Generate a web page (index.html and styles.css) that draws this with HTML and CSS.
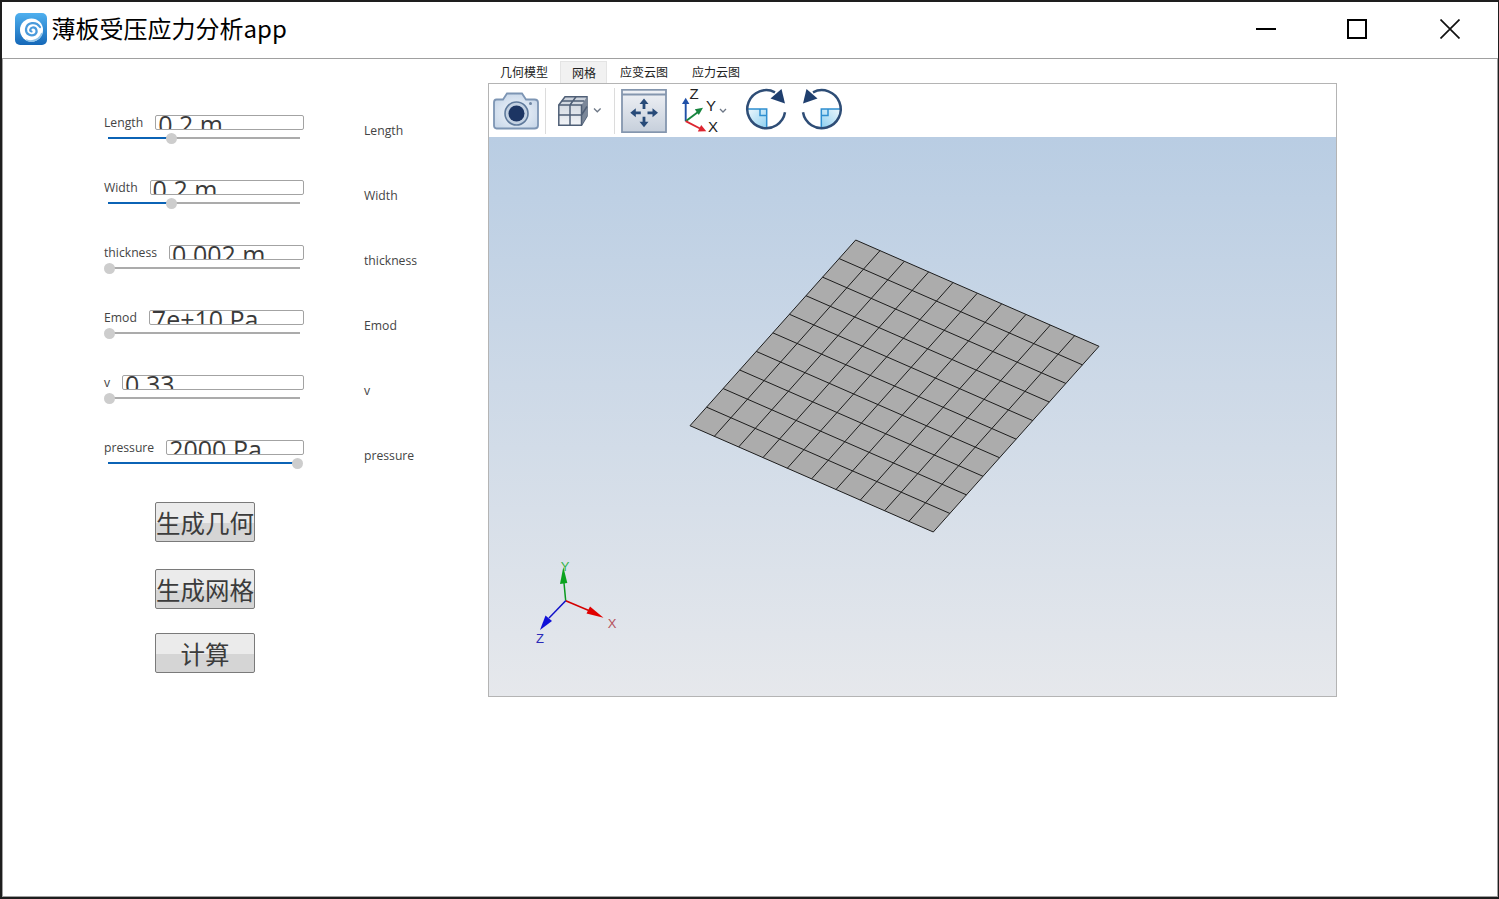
FILE: index.html
```html
<!DOCTYPE html>
<html lang="zh">
<head>
<meta charset="utf-8">
<title>薄板受压应力分析app</title>
<link rel="stylesheet" href="styles.css">
</head>
<body>
<div class="window">
  <header class="titlebar">
    <svg class="logo" viewBox="0 0 32 32">
      <defs><linearGradient id="lg" x1="0" y1="0" x2="0" y2="1"><stop offset="0" stop-color="#4fb0ef"/><stop offset="1" stop-color="#1568b8"/></linearGradient></defs>
      <rect width="32" height="32" rx="5" fill="url(#lg)"/>
      <circle cx="16.500" cy="17" r="11.500" fill="#fff"/>
      <path d="M27 20C25 26 18 30 11 27" fill="none" stroke="#8fc4ea" stroke-width="1.800"/>
      <path d="M25 14C21 8 12 9 11 16C10.500 21 16 24 20 21.500C23 19 21.500 14 17.500 14.500C15 15 14.500 18 16.500 18.500" fill="none" stroke="#4a9bdc" stroke-width="2.200" stroke-linecap="round"/>
    </svg>
    <h1 class="title">薄板受压应力分析app</h1>
    <div class="controls">
      <svg class="ctl ctl-min" viewBox="0 0 20 20"><path d="M0 10H20" stroke="#000" stroke-width="2"/></svg>
      <svg class="ctl ctl-max" viewBox="0 0 20 20"><rect x="1" y="1" width="18" height="18" fill="none" stroke="#000" stroke-width="2"/></svg>
      <svg class="ctl ctl-close" viewBox="0 0 20 20"><path d="M0.500 0.500L19.500 19.500M19.500 0.500L0.500 19.500" stroke="#111" stroke-width="1.700"/></svg>
    </div>
  </header>
  <main class="content">
    <section class="form">
      <div class="row">
        <div class="group">
          <div class="field"><span class="lbl">Length</span><div class="input"><span>0.2 m</span></div></div>
          <div class="track"><div class="fill on" style="width:63px"></div></div>
        </div>
        <span class="side">Length</span>
      </div>
      <div class="row">
        <div class="group">
          <div class="field"><span class="lbl">Width</span><div class="input"><span>0.2 m</span></div></div>
          <div class="track"><div class="fill on" style="width:63px"></div></div>
        </div>
        <span class="side">Width</span>
      </div>
      <div class="row">
        <div class="group">
          <div class="field"><span class="lbl">thickness</span><div class="input"><span>0.002 m</span></div></div>
          <div class="track"><div class="fill" style="width:1px"></div></div>
        </div>
        <span class="side">thickness</span>
      </div>
      <div class="row">
        <div class="group">
          <div class="field"><span class="lbl">Emod</span><div class="input"><span>7e+10 Pa</span></div></div>
          <div class="track"><div class="fill" style="width:1px"></div></div>
        </div>
        <span class="side">Emod</span>
      </div>
      <div class="row">
        <div class="group">
          <div class="field"><span class="lbl">v</span><div class="input"><span>0.33</span></div></div>
          <div class="track"><div class="fill" style="width:1px"></div></div>
        </div>
        <span class="side">v</span>
      </div>
      <div class="row">
        <div class="group">
          <div class="field"><span class="lbl">pressure</span><div class="input"><span>2000 Pa</span></div></div>
          <div class="track"><div class="fill on" style="width:189px"></div></div>
        </div>
        <span class="side">pressure</span>
      </div>
      <div class="buttons">
        <button class="btn" type="button">生成几何</button>
        <button class="btn" type="button">生成网格</button>
        <button class="btn btn-last" type="button">计算</button>
      </div>
    </section>
    <section class="viewer">
      <nav class="tabs">
        <span class="tab">几何模型</span>
        <span class="tab active">网格</span>
        <span class="tab">应变云图</span>
        <span class="tab">应力云图</span>
      </nav>
      <div class="panel">
        <div class="toolbar">
          <svg class="ic ic-cam" viewBox="0 0 46 38">
            <defs><radialGradient id="cam" cx="0.5" cy="0.55" r="0.6"><stop offset="0" stop-color="#f4f8fd"/><stop offset="1" stop-color="#c8d7e9"/></radialGradient></defs>
            <path d="M3.500 7.500H10L14 1.500H29L33 7.500H41.500Q45 7.500 45 10.500V33.500Q45 36.500 41.500 36.500H3.500Q1 36.500 1 33.500V10.500Q1 7.500 3.500 7.500Z" fill="url(#cam)" stroke="#7d95b4" stroke-width="1.800"/>
            <circle cx="23.500" cy="21.500" r="11.500" fill="#c3d1e2" stroke="#5f7a9c" stroke-width="1.600"/>
            <circle cx="23.500" cy="21.500" r="8" fill="#1c3563"/>
            <circle cx="37.500" cy="11.500" r="1.500" fill="#6f86a3"/>
          </svg>
          <span class="sep sep-a"></span>
          <svg class="ic ic-cube" viewBox="0 0 46 30">
            <defs><linearGradient id="cube" x1="0" y1="0" x2="0" y2="1"><stop offset="0" stop-color="#c9d0da"/><stop offset="1" stop-color="#f2f4f7"/></linearGradient></defs>
            <path d="M0.800 9L7 0.800H29V20L23.500 29.200H0.800Z" fill="url(#cube)" stroke="#4f5f76" stroke-width="1.500"/>
            <path d="M23.500 9L29 0.800V20L23.500 29.200Z" fill="#7b8799"/>
            <path d="M0.800 9H23.500V29.200M12 9V29.200M0.800 19H23.500M12 9L18 0.800M3.800 5H26.200M23.500 19L29 10.500" fill="none" stroke="#4f5f76" stroke-width="1.500"/>
            <path d="M36 12.500L39.300 15.800L42.600 12.500" fill="none" stroke="#6d7786" stroke-width="1.300"/>
          </svg>
          <span class="sep sep-b"></span>
          <svg class="ic ic-pan" viewBox="0 0 46 44">
            <defs><linearGradient id="pan" x1="0" y1="0" x2="0" y2="1"><stop offset="0" stop-color="#f0f2f6"/><stop offset="1" stop-color="#c6cfdb"/></linearGradient></defs>
            <rect x="1" y="0.800" width="44" height="42.400" fill="url(#pan)" stroke="#8496ae" stroke-width="1.800"/>
            <path d="M1 5.500H45" stroke="#8496ae" stroke-width="1.800"/>
            <g fill="#274a78" stroke="none">
              <path d="M23 9.500L27.500 15H24.400V20H21.600V15H18.500Z"/>
              <path d="M23 38.200L27.500 32.700H24.400V27.700H21.600V32.700H18.500Z"/>
              <path d="M9.300 23.800L14.800 19.300V22.400H19.800V25.200H14.800V28.300Z"/>
              <path d="M37 23.800L31.500 19.300V22.400H26.500V25.200H31.500V28.300Z"/>
            </g>
          </svg>
          <svg class="ic ic-axes" viewBox="0 0 46 44">
            <path d="M3.700 32.200V12" stroke="#1f50a8" stroke-width="1.900"/>
            <path d="M3.700 8.800L0 15H7.400Z" fill="#1f50a8"/>
            <path d="M3.700 32.200L16 23" stroke="#17853f" stroke-width="1.900"/>
            <path d="M21 18.800L12.800 20.200L16.800 26Z" fill="#17853f"/>
            <path d="M3.700 32.200L18 39.500" stroke="#dd2530" stroke-width="1.900"/>
            <path d="M24.300 42.200L15.800 42.500L19.200 36Z" fill="#dd2530"/>
            <text class="axl" x="7.500" y="9.500">Z</text>
            <text class="axl" x="24" y="22">Y</text>
            <text class="axl" x="26" y="42.500">X</text>
            <path d="M38 20L41 23L44 20" fill="none" stroke="#6d7786" stroke-width="1.300"/>
          </svg>
          <svg class="ic ic-rot" viewBox="0 0 42 43">
            <defs><linearGradient id="rq" x1="0" y1="0" x2="1" y2="1"><stop offset="0" stop-color="#eef8fd"/><stop offset="1" stop-color="#8fd0f0"/></linearGradient></defs>
            <path d="M2 20H21.700V39C11 39 2.500 31 2 20Z" fill="url(#rq)"/>
            <path d="M2 20H21.700V39M15 20V26.500H21.700" fill="none" stroke="#2f8fd0" stroke-width="1.500"/>
            <path d="M40 23.300A19 19 0 1 1 30 3.300" fill="none" stroke="#2e4d76" stroke-width="2.500"/>
            <path d="M40 14.500L25.500 9.500L36.500 0Z" fill="#1f3f6e"/>
          </svg>
          <svg class="ic ic-rot ic-rot-b" viewBox="0 0 42 43">
            <defs><linearGradient id="rq2" x1="1" y1="0" x2="0" y2="1"><stop offset="0" stop-color="#eef8fd"/><stop offset="1" stop-color="#8fd0f0"/></linearGradient></defs>
            <path d="M40 20H20.300V39C31 39 39.500 31 40 20Z" fill="url(#rq2)"/>
            <path d="M40 20H20.300V39M27 20V26.500H20.300" fill="none" stroke="#2f8fd0" stroke-width="1.500"/>
            <path d="M2 23.300A19 19 0 1 0 12 3.300" fill="none" stroke="#2e4d76" stroke-width="2.500"/>
            <path d="M2 14.500L16.500 9.500L5.500 0Z" fill="#1f3f6e"/>
          </svg>
        </div>
        <div class="scene">
          <svg class="scene-svg" viewBox="489 137 847 559">
            <path d="M855.700 240L1099 346.300L933.300 532L690 425.700Z" fill="#acacac"/>
            <path fill="none" stroke="#1c1c1c" stroke-width="1" d="M855.700 240L1099 346.300M839.130 258.570L1082.430 364.870M822.560 277.140L1065.860 383.440M805.990 295.710L1049.290 402.010M789.420 314.280L1032.720 420.580M772.850 332.850L1016.150 439.150M756.280 351.420L999.580 457.720M739.710 369.990L983.010 476.290M723.140 388.560L966.440 494.860M706.570 407.130L949.870 513.430M690 425.700L933.300 532M855.700 240L690 425.700M880.030 250.630L714.330 436.330M904.360 261.260L738.660 446.960M928.690 271.890L762.990 457.590M953.020 282.520L787.320 468.220M977.350 293.150L811.650 478.850M1001.680 303.780L836 489.480M1026.010 314.410L860.310 500.110M1050.340 325.040L884.640 510.740M1074.670 335.670L908.970 521.370M1099 346.300L933.300 532"/>
            <path d="M565.700 600.700L564 583" stroke="#0a9a1e" stroke-width="1.500"/>
            <path d="M563.300 567L560 584L567.300 583Z" fill="#0aa31e"/>
            <path d="M565.700 600.700L590 611" stroke="#d40000" stroke-width="1.500"/>
            <path d="M603.500 617.700L590 606.500L586.500 613.500Z" fill="#e00000"/>
            <path d="M565.700 600.700L549 618" stroke="#1010c8" stroke-width="1.500"/>
            <path d="M540 630L545.500 615.500L552 621Z" fill="#1010d8"/>
            <text class="tx tx-y" x="565" y="571">Y</text>
            <text class="tx tx-x" x="612" y="628">X</text>
            <text class="tx tx-z" x="540" y="642.500">Z</text>
          </svg>
        </div>
      </div>
    </section>
  </main>
</div>
</body>
</html>
```
FILE: styles.css
```css
* { box-sizing: border-box; }
html, body { margin: 0; height: 100%; }
body {
  background: #1e1e1e;
  padding: 2px 1px 2px 2px;
  font-family: "Noto Sans CJK SC", "Noto Sans", sans-serif;
  overflow: hidden;
}
.window {
  height: 100%;
  background: #fff;
  display: flex;
  flex-direction: column;
  border-bottom: 1px solid #a0a0a0;
}
.titlebar {
  height: 57px;
  flex: none;
  display: flex;
  align-items: center;
  padding: 0 0 2px 13px;
  border-bottom: 1px solid #a0a0a0;
}
.logo { width: 32px; height: 32px; flex: none; }
.title {
  margin: -2px 0 0 4.500px;
  font-size: 24px;
  font-weight: 400;
  line-height: 32px;
  color: #000;
}
.controls { margin-left: auto; display: flex; align-items: center; }
.ctl { width: 20px; height: 20px; display: block; }
.ctl-max { margin-left: 71px; }
.ctl-close { margin-left: 73px; margin-right: 38px; }
.content {
  flex: 1;
  display: flex;
  border-left: 1px solid #a0a0a0;
  border-right: 1px solid #a0a0a0;
}
.form {
  width: 485px;
  flex: none;
  padding: 56px 0 0 101px;
  display: flex;
  flex-direction: column;
  gap: 15px;
}
.row { display: flex; height: 50px; }
.group { width: 200px; flex: none; }
.field { display: flex; height: 15px; align-items: center; }
.lbl {
  font-family: "Open Sans", sans-serif;
  font-size: 12.200px;
  line-height: 15px;
  color: #444;
  margin-right: 12px;
}
.input {
  flex: 1;
  height: 15px;
  border: 1px solid #a3a3a3;
  border-radius: 2px;
  overflow: hidden;
  padding-left: 2px;
  font-family: "Open Sans", sans-serif;
  font-size: 25px;
  line-height: 30px;
  color: #3a3a3a;
  white-space: nowrap;
}
.input span { display: block; margin-top: -7px; }
.track {
  margin: 7px 0 0 4px;
  width: 192px;
  height: 2px;
  background: #ababab;
}
.fill { height: 2px; position: relative; }
.fill.on { background: #0b63b5; }
.fill::after {
  content: "";
  position: absolute;
  right: -5.500px;
  top: -4.500px;
  width: 11px;
  height: 11px;
  border-radius: 50%;
  background: #cdcdcd;
}
.side {
  margin: 8px 0 0 60px;
  font-family: "Open Sans", sans-serif;
  font-size: 12.200px;
  line-height: 15px;
  color: #444;
}
.buttons {
  margin: -3px 0 0 51px;
  display: flex;
  flex-direction: column;
  gap: 27px;
}
.btn {
  width: 100px;
  height: 40px;
  padding: 0;
  border: 1px solid #7a7a7a;
  border-radius: 2px;
  background: linear-gradient(#ebebeb 0, #ebebeb 53%, #d5d5d5 53%, #d5d5d5 100%);
  font-family: "Noto Sans CJK SC", sans-serif;
  font-size: 24.500px;
  line-height: 40px;
  color: #3c3c3c;
}
.btn-last { margin-top: -3px; }
.viewer {
  width: 849px;
  flex: none;
  padding-top: 2px;
  align-self: flex-start;
}
.tabs { display: flex; height: 22px; }
.tab {
  padding: 0 12px;
  font-size: 12px;
  line-height: 22px;
  color: #222;
}
.tab.active {
  background: #f1f1f1;
  border: 1px solid #e4e4e4;
  border-bottom: none;
  padding: 0 10px 0 11px;
  margin-right: 1px;
  line-height: 21px;
}
.panel {
  height: 614px;
  border: 1px solid #b4b4b4;
  display: flex;
  flex-direction: column;
}
.toolbar {
  height: 53px;
  flex: none;
  display: flex;
  align-items: center;
  background: #fff;
}
.ic { display: block; flex: none; }
.ic-cam { width: 46px; height: 38px; margin-left: 4px; }
.sep { width: 1px; height: 46px; background: #dcdcdc; flex: none; }
.sep-a { margin-left: 6px; }
.ic-cube { width: 46px; height: 30px; margin-left: 12px; }
.sep-b { margin-left: 10px; }
.ic-pan { width: 46px; height: 44px; margin-left: 6px; }
.ic-axes { width: 46px; height: 44px; margin-left: 15px; overflow: visible; }
.ic-rot { width: 42px; height: 43px; margin-left: 17px; overflow: visible; }
.ic-rot-b { margin-left: 14px; }
.axl {
  font-family: "Liberation Sans", sans-serif;
  font-size: 15px;
  fill: #222;
}
.scene {
  flex: 1;
  min-height: 0;
  background: linear-gradient(#b9cde3, #e6e8ec);
}
.scene-svg { display: block; width: 100%; height: 100%; }
.tx { font-family: "Liberation Sans", sans-serif; font-size: 13px; text-anchor: middle; }
.tx-y { fill: #35b54a; }
.tx-x { fill: #b5525c; }
.tx-z { fill: #2a2ab8; }
```
